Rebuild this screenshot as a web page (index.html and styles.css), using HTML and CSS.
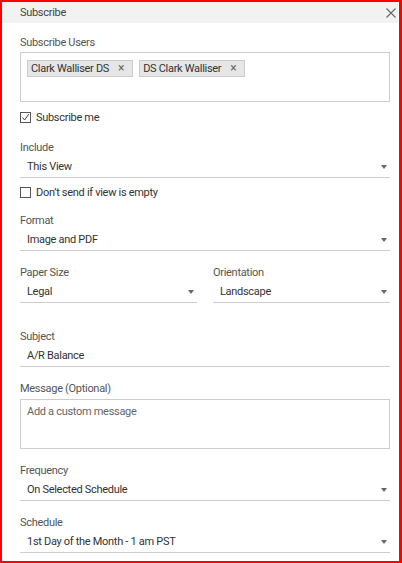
FILE: index.html
```html
<!DOCTYPE html>
<html lang="en">
<head>
	<title>Subscribe</title>
	<link rel="stylesheet" href="styles.css">
</head>
<body>

	<div class="frame">
		<div class="header">
			<span class="title">Subscribe</span>
			<svg class="close" width="10" height="10" viewBox="0 0 10 10"><path d="M0.5 0.5L9.5 9.5M9.5 0.5L0.5 9.5" stroke="#666" stroke-width="1.1" fill="none"/></svg>
		</div>

		<div class="content">
			<div class="label first">Subscribe Users</div>
			<div class="users">
				<span class="tag">Clark Walliser DS<span class="x">&times;</span></span>
				<span class="tag">DS Clark Walliser<span class="x">&times;</span></span>
			</div>

			<div class="check checked">
				<span class="box"><svg width="9" height="9" viewBox="0 0 9 9"><path d="M1.5 4.5L3.6 7L7.8 1" stroke="#444" stroke-width="1" fill="none"/></svg></span>
				Subscribe me
			</div>

			<div class="field include">
				<div class="label">Include</div>
				<div class="select">This View<span class="arrow"></span></div>
			</div>

			<div class="check small">
				<span class="box"></span>
				Don’t send if view is empty
			</div>

			<div class="field">
				<div class="label">Format</div>
				<div class="select">Image and PDF<span class="arrow"></span></div>
			</div>

			<div class="field row">
				<div class="col">
					<div class="label">Paper Size</div>
					<div class="select">Legal<span class="arrow"></span></div>
				</div>
				<div class="col">
					<div class="label">Orientation</div>
					<div class="select">Landscape<span class="arrow"></span></div>
				</div>
			</div>

			<div class="field subject">
				<div class="label">Subject</div>
				<div class="select">A/R Balance</div>
			</div>

			<div class="field">
				<div class="label">Message (Optional)</div>
				<div class="message">Add a custom message</div>
			</div>

			<div class="field">
				<div class="label">Frequency</div>
				<div class="select">On Selected Schedule<span class="arrow"></span></div>
			</div>

			<div class="field">
				<div class="label">Schedule</div>
				<div class="select">1st Day of the Month - 1 am PST<span class="arrow"></span></div>
			</div>
		</div>
	</div>

</body>
</html>
```

FILE: styles.css
```css
* {
	box-sizing: border-box;
}

html, body {
	margin: 0;
	padding: 0;
}

body {
	font-family: Roboto, "Liberation Sans", sans-serif;
	font-size: 11px;
	letter-spacing: -0.3px;
	color: #333;
}

.frame {
	width: 402px;
	height: 563px;
	border: 2px solid #f00;
	border-right-width: 3px;
	background: #fff;
	overflow: hidden;
}

.header {
	height: 21px;
	margin-right: 1px;
	background: #f2f2f2;
	display: flex;
	align-items: center;
	justify-content: space-between;
	padding: 0 2px 0 18px;
}

.title {
	color: #444;
}

.close {
	display: block;
}

.content {
	padding: 0 9px 0 18px;
}

.label {
	height: 14px;
	line-height: 14px;
	color: #555;
}

.label.first {
	margin-top: 13px;
}

.users {
	margin-top: 2px;
	height: 50px;
	border: 1px solid #ccc;
	padding: 7px 6px 0;
	display: flex;
	align-items: flex-start;
	gap: 6px;
}

.tag {
	height: 17px;
	line-height: 15px;
	background: #e6e6e6;
	border: 1px solid #ccc;
	padding: 0 8px 0 3px;
	color: #333;
	display: flex;
	align-items: center;
}

.tag .x {
	margin-left: 9px;
	color: #666;
	font-size: 12px;
}

.check {
	display: flex;
	align-items: center;
	gap: 5px;
	height: 14px;
	margin-top: 8px;
	color: #333;
}

.check.small {
	margin-top: 7px;
}

.box {
	width: 11px;
	height: 11px;
	border: 1px solid #555;
	display: flex;
	align-items: center;
	justify-content: center;
}

.box svg {
	display: block;
}

.field {
	margin-top: 15px;
}

.field.include {
	margin-top: 17px;
}

.field.subject {
	margin-top: 27px;
}

.select {
	margin-top: 1px;
	height: 22px;
	line-height: 21px;
	border-bottom: 1px solid #ccc;
	padding-left: 7px;
	display: flex;
	justify-content: space-between;
	align-items: center;
	color: #333;
}

.arrow {
	width: 0;
	height: 0;
	margin-right: 3px;
	border-left: 3px solid transparent;
	border-right: 3px solid transparent;
	border-top: 4px solid #666;
}

.row {
	display: flex;
	gap: 16px;
}

.col {
	flex: 1;
}

.message {
	margin-top: 3px;
	height: 50px;
	border: 1px solid #ccc;
	padding: 5px 6px;
	color: #666;
}
```
